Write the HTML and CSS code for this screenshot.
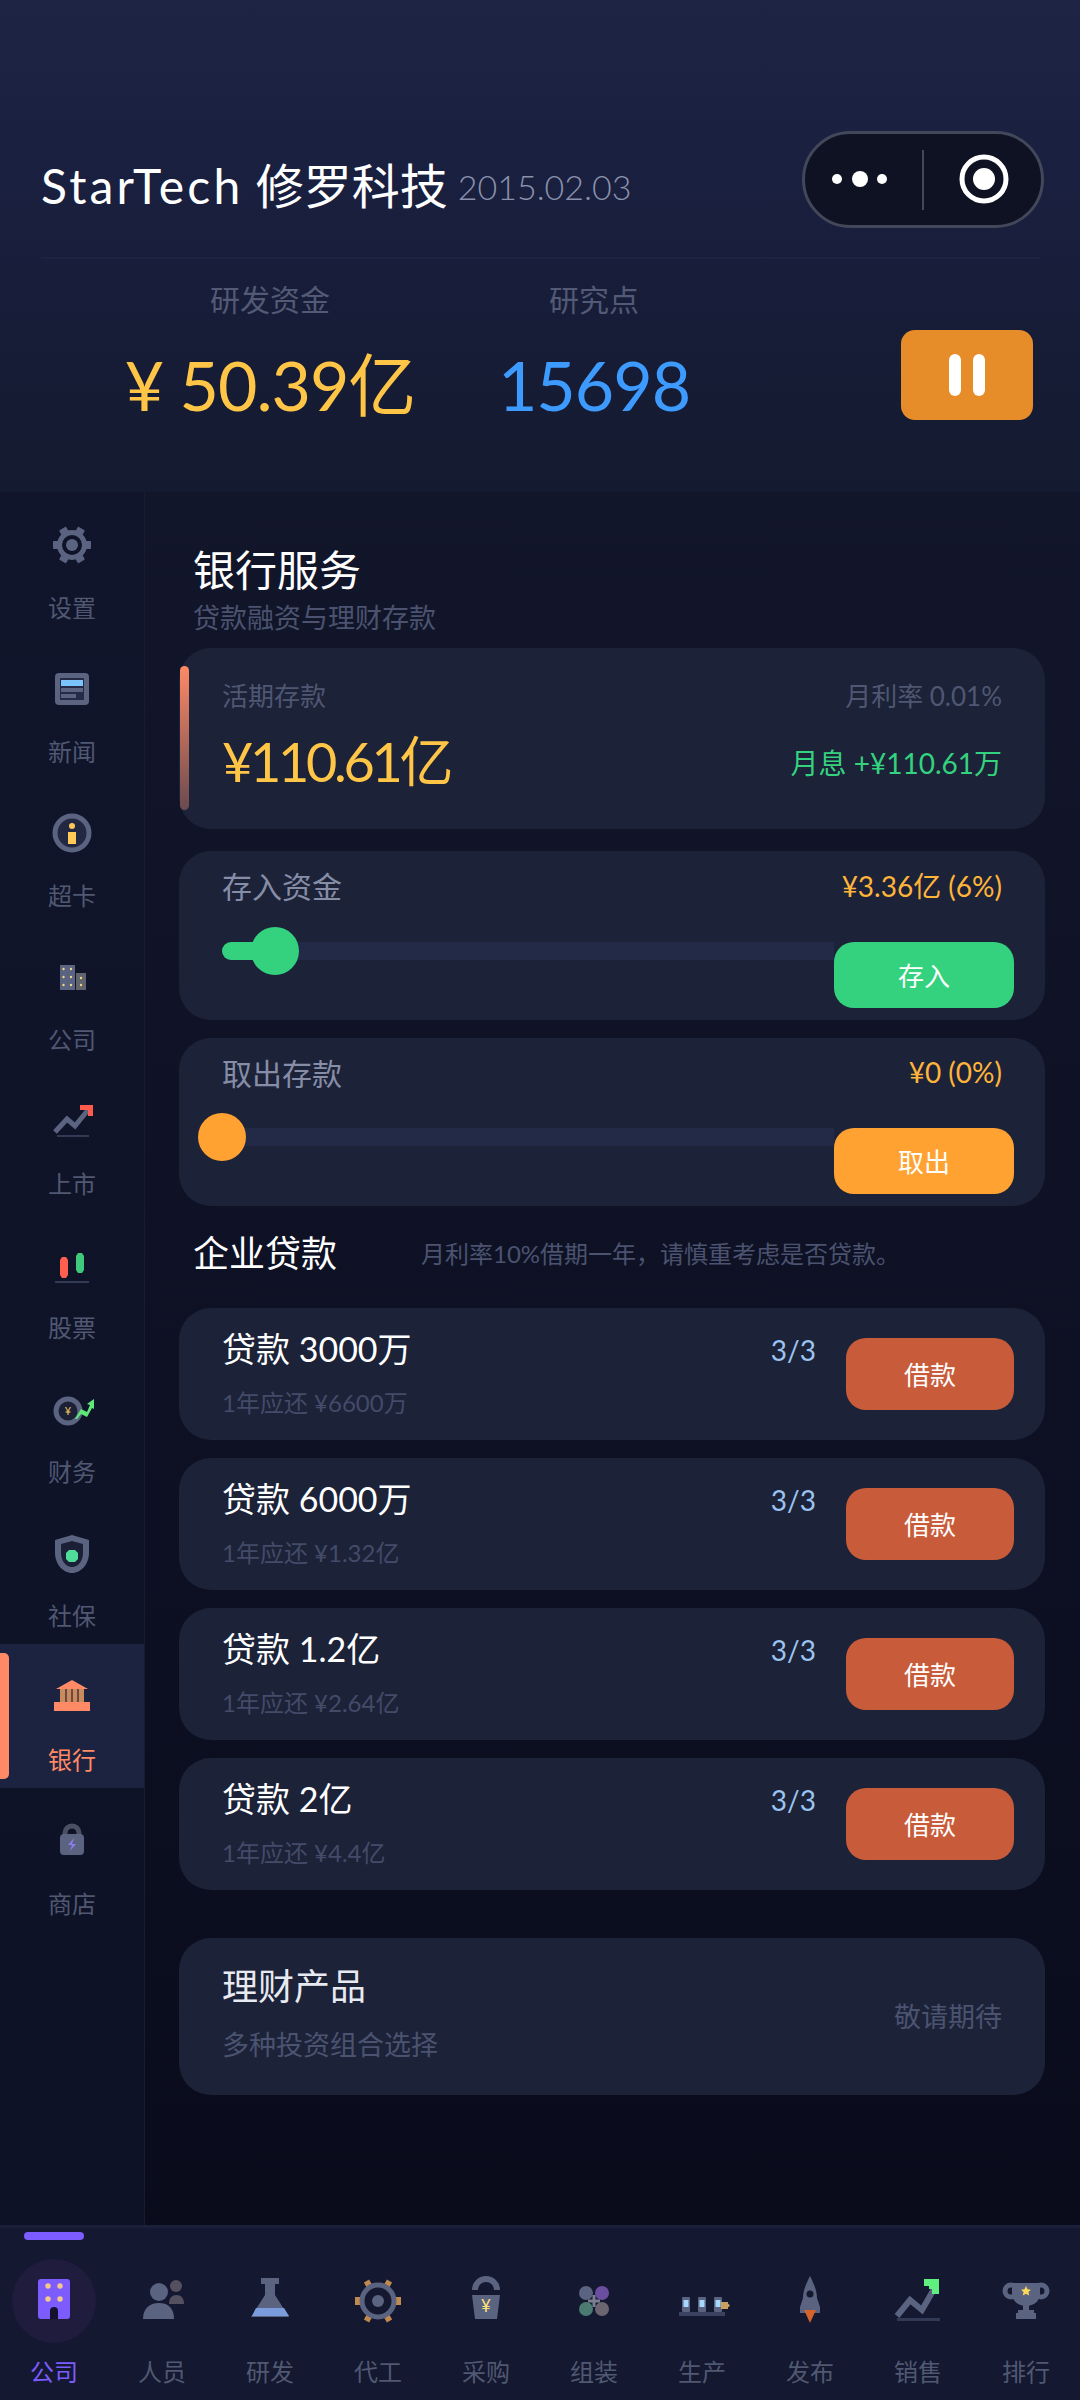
FILE: index.html
```html
<!DOCTYPE html>
<html lang="zh-CN">
<head>
    <meta charset="UTF-8">
    <meta name="viewport" content="width=device-width, initial-scale=1.0">
    <title>StarTech 银行</title>
    <link rel="stylesheet" href="styles.css">
</head>
<body>
<div class="app">

    <!-- Header -->
    <header class="header">
        <div class="title-row">
            <div class="title-text">
                <span class="company"><span class="brand">StarTech</span> 修罗科技</span>
                <span class="date">2015.02.03</span>
            </div>
            <div class="capsule">
                <svg width="236" height="91" viewBox="0 0 236 91">
                    <circle cx="32" cy="45" r="5" fill="#fff"/>
                    <circle cx="55" cy="45" r="8" fill="#fff"/>
                    <circle cx="77" cy="45" r="5" fill="#fff"/>
                    <rect x="117" y="16" width="2" height="60" fill="#43475a"/>
                    <circle cx="179" cy="45" r="22" fill="none" stroke="#fff" stroke-width="5"/>
                    <circle cx="179" cy="45" r="11" fill="#fff"/>
                </svg>
            </div>
        </div>
        <div class="header-line"></div>
        <div class="stats-row">
            <div class="stat">
                <div class="stat-label">研发资金</div>
                <div class="stat-value gold">¥ 50.39亿</div>
            </div>
            <div class="stat">
                <div class="stat-label">研究点</div>
                <div class="stat-value blue">15698</div>
            </div>
            <div class="pause-btn"><span></span><span></span></div>
        </div>
    </header>

    <div class="middle">
        <!-- Left menu -->
        <nav class="sidebar">
            <div class="side-item">
                <svg class="side-icon" viewBox="0 0 56 56">
                    <g fill="#5a6380">
                        <rect x="24" y="9" width="8" height="38" rx="1" transform="rotate(30 28 28)"/>
                        <rect x="24" y="9" width="8" height="38" rx="1" transform="rotate(90 28 28)"/>
                        <rect x="24" y="9" width="8" height="38" rx="1" transform="rotate(150 28 28)"/>
                        <circle cx="28" cy="28" r="15"/>
                    </g>
                    <circle cx="28" cy="28" r="10" fill="#0f1328"/>
                    <circle cx="28" cy="28" r="6" fill="#5a6380"/>
                </svg>
                <span>设置</span>
            </div>
            <div class="side-item">
                <svg class="side-icon" viewBox="0 0 56 56">
                    <rect x="11" y="12" width="34" height="32" rx="4" fill="#5a6380"/>
                    <rect x="16" y="17" width="24" height="22" fill="#252a45"/>
                    <rect x="17" y="19" width="22" height="6" fill="#7cc4ff"/>
                    <rect x="17" y="27" width="22" height="4" fill="#5a6380"/>
                    <rect x="17" y="33" width="15" height="4" fill="#5a6380"/>
                </svg>
                <span>新闻</span>
            </div>
            <div class="side-item">
                <svg class="side-icon" viewBox="0 0 56 56">
                    <circle cx="28" cy="28" r="17" fill="#232842" stroke="#5a6380" stroke-width="5"/>
                    <circle cx="28" cy="21" r="3" fill="#ffc857"/>
                    <rect x="24" y="27" width="8" height="12" fill="#ffc857"/>
                </svg>
                <span>超卡</span>
            </div>
            <div class="side-item">
                <svg class="side-icon" viewBox="0 0 56 56">
                    <rect x="16" y="16" width="15" height="25" fill="#5a6380"/>
                    <rect x="32" y="24" width="10" height="17" fill="#62646c"/>
                    <g fill="#f2d28c">
                        <circle cx="19.500" cy="20" r="1.200"/><circle cx="27" cy="20" r="1.200"/>
                        <circle cx="19.500" cy="28" r="1.200"/><circle cx="27" cy="28" r="1.200"/>
                        <circle cx="19.500" cy="36" r="1.200"/><circle cx="27" cy="36" r="1.200"/>
                        <circle cx="37" cy="29" r="1.200"/><circle cx="37" cy="36" r="1.200"/>
                    </g>
                </svg>
                <span>公司</span>
            </div>
            <div class="side-item">
                <svg class="side-icon" viewBox="0 0 56 56">
                    <polyline points="11,39 23,26 31,33 44,17" fill="none" stroke="#5a6380" stroke-width="5"/>
                    <path d="M36 12h13v11h-5v-6h-8z" fill="#ff5a4a"/>
                    <rect x="13" y="42" width="32" height="2" fill="#333a55"/>
                </svg>
                <span>上市</span>
            </div>
            <div class="side-item">
                <svg class="side-icon" viewBox="0 0 56 56">
                    <path d="M18 20h4l2 3v15l-2 3h-4l-2-3V23z" fill="#ff5f4f"/>
                    <path d="M34 16h4l2 3v14l-2 3h-4l-2-3V19z" fill="#3fc97c"/>
                    <rect x="11" y="44" width="34" height="2" fill="#333a55"/>
                </svg>
                <span>股票</span>
            </div>
            <div class="side-item">
                <svg class="side-icon" viewBox="0 0 56 56">
                    <circle cx="24" cy="30" r="12" fill="#1c2036" stroke="#5a6380" stroke-width="5"/>
                    <text x="24" y="34" class="mini-yen" text-anchor="middle">¥</text>
                    <path d="M31 38l6-10 6 3 3-7-3-1 7-5v10l-2-1-5 9-6-3-4 5z" fill="#5fe87a"/>
                </svg>
                <span>财务</span>
            </div>
            <div class="side-item">
                <svg class="side-icon" viewBox="0 0 56 56">
                    <path d="M28 10l17 5v13c0 11-8 20-17 20s-17-9-17-20V15z" fill="#5a6380"/>
                    <path d="M28 16l11 3v9c0 8-5 14-11 14s-11-6-11-14v-9z" fill="#1c2036"/>
                    <path d="M25 25h6l3 3v6l-3 3h-6l-3-3v-6z" fill="#4fdc9b"/>
                </svg>
                <span>社保</span>
            </div>
            <div class="side-item active">
                <i class="side-mark"></i>
                <svg class="side-icon" viewBox="0 0 56 56">
                    <path d="M28 11l16 9H12z" fill="#ff8a65"/>
                    <rect x="16" y="20" width="24" height="13" fill="#c98a60"/>
                    <rect x="21" y="20" width="2" height="13" fill="#6d4a3c"/>
                    <rect x="27" y="20" width="2" height="13" fill="#6d4a3c"/>
                    <rect x="33" y="20" width="2" height="13" fill="#6d4a3c"/>
                    <rect x="10" y="33" width="36" height="9" fill="#ff8a65"/>
                </svg>
                <span>银行</span>
            </div>
            <div class="side-item">
                <svg class="side-icon" viewBox="0 0 56 56">
                    <path d="M21 22v-2a7 7 0 0 1 14 0v2" fill="none" stroke="#4c5064" stroke-width="5"/>
                    <rect x="16" y="21" width="24" height="21" rx="4" fill="#5a6380"/>
                    <path d="M30 25l-6 7h4l-2 6 6-7h-4z" fill="#8a7ff0"/>
                </svg>
                <span>商店</span>
            </div>
        </nav>

        <!-- Bank content -->
        <main class="content">
            <h2 class="page-title">银行服务</h2>
            <div class="page-sub">贷款融资与理财存款</div>

            <section class="card deposit-card">
                <i class="accent-bar"></i>
                <div class="row-between">
                    <span class="muted">活期存款</span>
                    <span class="muted">月利率 0.01%</span>
                </div>
                <div class="row-between amount-row">
                    <span class="amount">¥110.61亿</span>
                    <span class="interest">月息 +¥110.61万</span>
                </div>
            </section>

            <section class="card slider-card">
                <div class="row-between slider-head">
                    <span class="slider-label">存入资金</span>
                    <span class="slider-value">¥3.36亿 (6%)</span>
                </div>
                <div class="slider-row">
                    <div class="track">
                        <div class="track-fill" style="width: 8%"></div>
                        <div class="knob knob-green" style="left: 29px"></div>
                    </div>
                    <button class="action green-btn">存入</button>
                </div>
            </section>

            <section class="card slider-card take-card">
                <div class="row-between slider-head">
                    <span class="slider-label">取出存款</span>
                    <span class="slider-value">¥0 (0%)</span>
                </div>
                <div class="slider-row">
                    <div class="track">
                        <div class="knob knob-orange" style="left: -24px"></div>
                    </div>
                    <button class="action orange-btn">取出</button>
                </div>
            </section>

            <div class="loan-head">
                <h3>企业贷款</h3>
                <span>月利率10%借期一年，请慎重考虑是否贷款。</span>
            </div>

            <section class="card loan-card">
                <div class="loan-info">
                    <div class="loan-name">贷款 3000万</div>
                    <div class="loan-sub">1年应还 ¥6600万</div>
                </div>
                <span class="loan-count">3/3</span>
                <button class="action loan-btn">借款</button>
            </section>
            <section class="card loan-card">
                <div class="loan-info">
                    <div class="loan-name">贷款 6000万</div>
                    <div class="loan-sub">1年应还 ¥1.32亿</div>
                </div>
                <span class="loan-count">3/3</span>
                <button class="action loan-btn">借款</button>
            </section>
            <section class="card loan-card">
                <div class="loan-info">
                    <div class="loan-name">贷款 1.2亿</div>
                    <div class="loan-sub">1年应还 ¥2.64亿</div>
                </div>
                <span class="loan-count">3/3</span>
                <button class="action loan-btn">借款</button>
            </section>
            <section class="card loan-card">
                <div class="loan-info">
                    <div class="loan-name">贷款 2亿</div>
                    <div class="loan-sub">1年应还 ¥4.4亿</div>
                </div>
                <span class="loan-count">3/3</span>
                <button class="action loan-btn">借款</button>
            </section>

            <section class="card finance-card">
                <div>
                    <div class="finance-name">理财产品</div>
                    <div class="finance-sub">多种投资组合选择</div>
                </div>
                <span class="finance-soon">敬请期待</span>
            </section>
        </main>
    </div>

    <!-- Bottom tabs -->
    <footer class="tabs">
        <div class="tab active">
            <i class="tab-mark"></i>
            <div class="tab-circle">
                <svg class="tab-icon" viewBox="0 0 64 64">
                    <rect x="16" y="10" width="32" height="40" rx="3" fill="#7c5cff"/>
                    <g fill="#f5c88a">
                        <circle cx="26" cy="17" r="2.700"/><circle cx="38" cy="17" r="2.700"/>
                        <circle cx="26" cy="30" r="2.700"/><circle cx="38" cy="30" r="2.700"/>
                    </g>
                    <path d="M28 50V42a4 4 0 0 1 8 0v8z" fill="#15122e"/>
                </svg>
            </div>
            <span>公司</span>
        </div>
        <div class="tab">
            <div class="tab-circle">
                <svg class="tab-icon" viewBox="0 0 64 64">
                    <circle cx="29" cy="23" r="9" fill="#5a6380"/>
                    <path d="M13 50c0-10 6-16 16-16s15 6 15 16z" fill="#5a6380"/>
                    <circle cx="46" cy="17" r="6" fill="#55505f"/>
                    <path d="M39 35c0-6 3-9 7.500-9s7.500 3 7.500 9z" fill="#55505f"/>
                </svg>
            </div>
            <span>人员</span>
        </div>
        <div class="tab">
            <div class="tab-circle">
                <svg class="tab-icon" viewBox="0 0 64 64">
                    <path d="M23 9h18v6h-4v11l14 22H13l14-22V15h-4z" fill="#5a6380"/>
                    <path d="M18 39h28l5 8H14z" fill="#7b9cdc"/>
                </svg>
            </div>
            <span>研发</span>
        </div>
        <div class="tab">
            <div class="tab-circle">
                <svg class="tab-icon" viewBox="0 0 64 64">
                    <g fill="#c08a4e">
                        <rect x="9" y="28" width="6" height="8"/>
                        <rect x="49" y="28" width="6" height="8"/>
                        <rect x="29" y="9" width="6" height="8" transform="rotate(30 32 32)"/>
                        <rect x="29" y="9" width="6" height="8" transform="rotate(-30 32 32)"/>
                        <rect x="29" y="47" width="6" height="8" transform="rotate(30 32 32)"/>
                        <rect x="29" y="47" width="6" height="8" transform="rotate(-30 32 32)"/>
                    </g>
                    <circle cx="32" cy="32" r="16" fill="none" stroke="#5a6380" stroke-width="5"/>
                    <circle cx="32" cy="32" r="6" fill="#5a6380"/>
                </svg>
            </div>
            <span>代工</span>
        </div>
        <div class="tab">
            <div class="tab-circle">
                <svg class="tab-icon" viewBox="0 0 64 64">
                    <path d="M21 21a11 11 0 0 1 22 0" fill="none" stroke="#5a6380" stroke-width="6"/>
                    <path d="M18 26h28l-3 24H21z" fill="#5a6380"/>
                    <text x="32" y="43" class="tab-yen" text-anchor="middle">¥</text>
                </svg>
            </div>
            <span>采购</span>
        </div>
        <div class="tab">
            <div class="tab-circle">
                <svg class="tab-icon" viewBox="0 0 64 64">
                    <circle cx="24" cy="24" r="7" fill="#5a6380"/>
                    <circle cx="40" cy="24" r="7" fill="#6a4fa0"/>
                    <circle cx="24" cy="40" r="7" fill="#4a7a70"/>
                    <circle cx="40" cy="40" r="7" fill="#6a6570"/>
                    <rect x="30.500" y="26" width="3" height="12" fill="#7a7f8f"/>
                    <rect x="26" y="30.500" width="12" height="3" fill="#7a7f8f"/>
                </svg>
            </div>
            <span>组装</span>
        </div>
        <div class="tab">
            <div class="tab-circle">
                <svg class="tab-icon" viewBox="0 0 64 64">
                    <rect x="9" y="43" width="46" height="4" fill="#3a4260"/>
                    <g fill="#5a6380">
                        <rect x="12" y="28" width="8" height="15" rx="1"/>
                        <rect x="28" y="28" width="8" height="15" rx="1"/>
                        <rect x="44" y="28" width="8" height="15" rx="1"/>
                    </g>
                    <g fill="#a8d8ff">
                        <rect x="13.500" y="31" width="5" height="7"/>
                        <rect x="29.500" y="31" width="5" height="7"/>
                        <rect x="45.500" y="31" width="5" height="7"/>
                    </g>
                    <rect x="51" y="33" width="7" height="7" fill="#c9a060"/>
                    <path d="M58 34.500l2 2-2 2z" fill="#c9a060"/>
                </svg>
            </div>
            <span>生产</span>
        </div>
        <div class="tab">
            <div class="tab-circle">
                <svg class="tab-icon" viewBox="0 0 64 64">
                    <path d="M32 7c4 8 7 15 7 22l3 9v6H22v-6l3-9c0-7 3-14 7-22z" fill="#5a6380"/>
                    <circle cx="32" cy="25" r="3.500" fill="#15192e"/>
                    <path d="M26 41h12l-6 13z" fill="#d4642a"/>
                </svg>
            </div>
            <span>发布</span>
        </div>
        <div class="tab">
            <div class="tab-circle">
                <svg class="tab-icon" viewBox="0 0 64 64">
                    <polyline points="11,47 24,31 36,41 48,20" fill="none" stroke="#5a6380" stroke-width="6"/>
                    <path d="M38 10h15v15h-7v-8h-8z" fill="#5ff07f"/>
                    <rect x="43" y="17" width="3" height="3" fill="#5ff07f"/>
                    <rect x="11" y="49" width="43" height="3" fill="#333a55"/>
                </svg>
            </div>
            <span>销售</span>
        </div>
        <div class="tab">
            <div class="tab-circle">
                <svg class="tab-icon" viewBox="0 0 64 64">
                    <circle cx="17" cy="22" r="6" fill="none" stroke="#5a6380" stroke-width="5"/>
                    <circle cx="47" cy="22" r="6" fill="none" stroke="#5a6380" stroke-width="5"/>
                    <path d="M18 14h28v10c0 8-6 13-14 13s-14-5-14-13z" fill="#5a6380"/>
                    <rect x="29" y="36" width="6" height="7" fill="#5a6380"/>
                    <rect x="24" y="41" width="16" height="3" fill="#5a6380"/>
                    <rect x="22" y="44" width="20" height="6" fill="#5a6380"/>
                    <path d="M32 17l1.500 3.300 3.500.4-2.600 2.300.8 3.500-3.200-1.800-3.200 1.800.8-3.500-2.600-2.300 3.500-.4z" fill="#ffd95a"/>
                </svg>
            </div>
            <span>排行</span>
        </div>
    </footer>
</div>
</body>
</html>
```

FILE: styles.css
```css
* {
    box-sizing: border-box;
}
body {
    margin: 0;
    padding: 0;
    background-color: #0c0f20;
    font-family: Lato, "Noto Sans CJK SC", sans-serif;
}
.app {
    width: 1080px;
    height: 2400px;
    display: flex;
    flex-direction: column;
    overflow: hidden;
}

/* header */
.header {
    height: 492px;
    flex: none;
    background: linear-gradient(180deg, #1e2444 0%, #1a2040 30%, #141a2f 100%);
}
.title-row {
    height: 257px;
    padding: 131px 36px 0 41px;
    display: flex;
    justify-content: space-between;
    align-items: flex-start;
}
.title-text {
    display: flex;
    align-items: center;
    gap: 10px;
    padding-top: 20px;
}
.company {
    font-size: 48px;
    line-height: 70px;
    color: #fff;
}
.brand {
    letter-spacing: 3.2px;
}
.date {
    font-size: 34px;
    color: #8a91ab;
    font-weight: 300;
}
.capsule {
    width: 242px;
    height: 97px;
    background-color: #0f1222;
    border: 3px solid #43475a;
    border-radius: 49px;
}
.capsule svg {
    display: block;
}
.header-line {
    height: 2px;
    margin: 0 40px 0 41px;
    background-color: #1d2341;
}
.stats-row {
    display: flex;
    padding: 20px 47px 0 108px;
}
.stat {
    width: 324px;
    text-align: center;
}
.stat-label {
    font-size: 30px;
    line-height: 40px;
    color: #525a75;
}
.stat-value {
    margin-top: 21px;
    font-size: 68px;
    line-height: 90px;
    letter-spacing: -1px;
}
.gold {
    color: #ffc547;
}
.blue {
    color: #3d9bff;
}
.pause-btn {
    width: 132px;
    height: 90px;
    margin: 51px 0 0 auto;
    background-color: #e68d2a;
    border-radius: 14px;
    display: flex;
    justify-content: center;
    align-items: center;
    gap: 12px;
}
.pause-btn span {
    width: 12px;
    height: 42px;
    background-color: #fff;
    border-radius: 6px;
}

/* middle */
.middle {
    flex: 1;
    display: flex;
    min-height: 0;
}
.sidebar {
    width: 145px;
    flex: none;
    background: linear-gradient(180deg, #11152b 0%, #0e1226 100%);
    border-right: 1px solid #171c33;
}
.side-item {
    position: relative;
    height: 144px;
    padding-top: 25px;
    display: flex;
    flex-direction: column;
    align-items: center;
    font-size: 24px;
    line-height: 36px;
    color: #505872;
}
.side-icon {
    width: 56px;
    height: 56px;
    margin-bottom: 17px;
}
.side-item.active {
    background-color: #1c2340;
    color: #ff8a65;
}
.side-mark {
    position: absolute;
    left: 0;
    top: 9px;
    width: 9px;
    height: 126px;
    background-color: #ff8a65;
    border-radius: 0 5px 5px 0;
}
.mini-yen {
    font-size: 11px;
    fill: #f2c860;
}
.content {
    flex: 1;
    padding: 50px 34px 0;
    background: linear-gradient(180deg, #12162a 0%, #0e1124 50%, #0a0c1c 100%);
}
.page-title {
    margin: 0 0 0 14px;
    font-size: 42px;
    line-height: 56px;
    font-weight: 400;
    color: #fff;
}
.page-sub {
    margin: 2px 0 12px 14px;
    font-size: 27px;
    line-height: 36px;
    color: #4b5370;
}
.card {
    position: relative;
    width: 866px;
    background-color: #1c2238;
    border-radius: 32px;
}
.row-between {
    display: flex;
    justify-content: space-between;
    align-items: center;
}
.deposit-card {
    height: 181px;
    padding: 30px 43px 0 43px;
    margin-bottom: 22px;
}
.accent-bar {
    position: absolute;
    left: 1px;
    top: 18px;
    width: 9px;
    height: 144px;
    border-radius: 5px;
    background: linear-gradient(180deg, #ff8a65 0%, #6a4a50 100%);
}
.muted {
    font-size: 26px;
    line-height: 36px;
    color: #4f5772;
}
.amount-row {
    margin-top: 13px;
}
.amount {
    font-size: 54px;
    line-height: 70px;
    letter-spacing: -3.3px;
    color: #ffc547;
}
.interest {
    font-size: 28px;
    color: #34d27f;
}
.slider-card {
    height: 169px;
    padding: 14px 31px 0 43px;
    margin-bottom: 18px;
}
.take-card {
    height: 168px;
    margin-bottom: 0;
}
.slider-head {
    height: 40px;
    padding-right: 12px;
}
.slider-label {
    font-size: 30px;
    color: #868da6;
}
.slider-value {
    font-size: 28px;
    color: #ffb43a;
}
.slider-row {
    display: flex;
    margin-top: 36px;
}
.slider-card:not(.take-card) .slider-row {
    margin-top: 37px;
}
.track {
    position: relative;
    flex: 1;
    height: 18px;
    background-color: #232a47;
    border-radius: 9px 0 0 9px;
}
.track-fill {
    height: 18px;
    background-color: #34d27f;
    border-radius: 9px 0 0 9px;
}
.knob {
    position: absolute;
    top: -15px;
    width: 48px;
    height: 48px;
    border-radius: 50%;
}
.knob-green {
    background-color: #34d27f;
}
.knob-orange {
    background-color: #ffa232;
}
.action {
    width: 180px;
    height: 66px;
    border: none;
    border-radius: 20px;
    font-family: inherit;
    font-size: 26px;
    color: #fff;
    padding: 0 0 2px;
}
.green-btn {
    background-color: #34d27f;
}
.orange-btn {
    background-color: #ffa232;
}
.loan-head {
    height: 102px;
    padding: 18px 0 0 14px;
    display: flex;
    align-items: flex-start;
}
.loan-head h3 {
    width: 228px;
    margin: 0;
    font-size: 36px;
    line-height: 58px;
    font-weight: 400;
    color: #fff;
}
.loan-head span {
    font-size: 24px;
    line-height: 60px;
    color: #4b5370;
}
.loan-card {
    height: 132px;
    margin-bottom: 18px;
    padding: 0 31px 0 43px;
    display: flex;
    align-items: center;
}
.loan-info {
    flex: 1;
}
.loan-name {
    font-size: 34px;
    line-height: 44px;
    color: #fff;
}
.loan-sub {
    margin-top: 14px;
    font-size: 24px;
    line-height: 36px;
    color: #434b68;
}
.loan-count {
    align-self: flex-start;
    margin-right: 30px;
    padding-top: 22px;
    font-size: 28px;
    line-height: 40px;
    color: #9cc4f0;
}
.loan-btn {
    width: 168px;
    height: 72px;
    background-color: #c85c3a;
    font-size: 26px;
}
.finance-card {
    height: 157px;
    margin-top: 48px;
    padding: 26px 43px 0 43px;
    display: flex;
    justify-content: space-between;
}
.finance-name {
    font-size: 36px;
    line-height: 44px;
    color: #e8eaf2;
}
.finance-sub {
    margin-top: 19px;
    font-size: 27px;
    line-height: 36px;
    color: #4b5370;
}
.finance-soon {
    margin-top: 35px;
    font-size: 27px;
    line-height: 36px;
    color: #4b5370;
}

/* bottom tabs */
.tabs {
    height: 175px;
    flex: none;
    display: flex;
    background-color: #141830;
    border-top: 3px solid #1a1f3a;
}
.tab {
    position: relative;
    width: 108px;
    padding-top: 31px;
    display: flex;
    flex-direction: column;
    align-items: center;
    font-size: 24px;
    line-height: 36px;
    color: #505872;
}
.tab.active {
    color: #7c5cff;
}
.tab-circle {
    width: 84px;
    height: 84px;
    margin-bottom: 11px;
    border-radius: 50%;
    display: flex;
    justify-content: center;
    align-items: center;
}
.tab.active .tab-circle {
    background-color: #1f1c3e;
}
.tab-icon {
    width: 64px;
    height: 64px;
}
.tab-mark {
    position: absolute;
    left: 24px;
    top: 4px;
    width: 60px;
    height: 8px;
    background-color: #7c5cff;
    border-radius: 4px;
}
.tab-yen {
    font-size: 17px;
    fill: #ffe17a;
}
```
